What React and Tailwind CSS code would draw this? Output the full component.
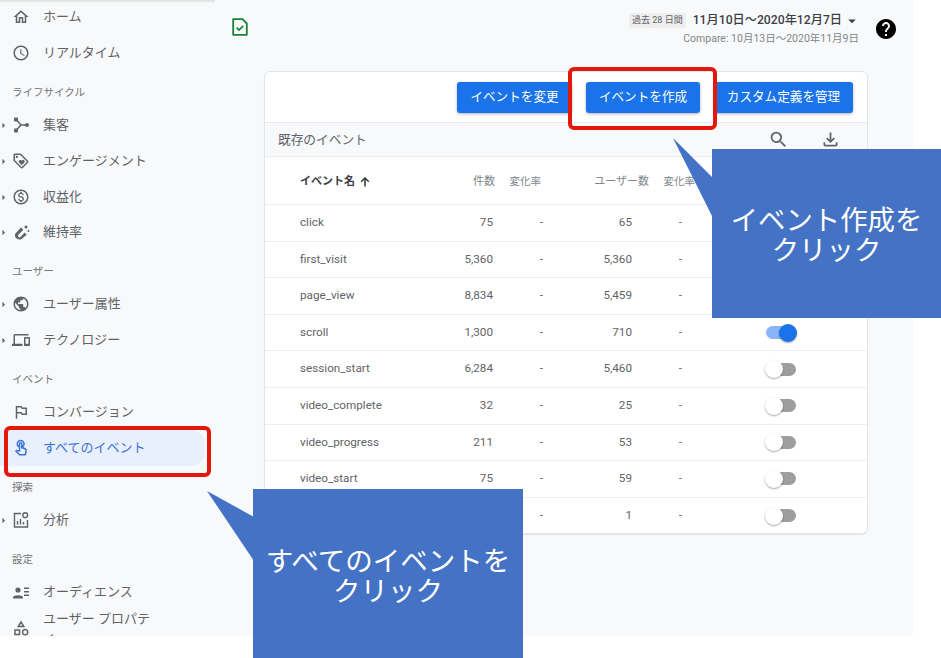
import React from "react";
import {
  MdOutlineHome, MdAccessTime, MdOutlineLoyalty, MdOutlineMonetizationOn, MdPublic,
  MdOutlineDevices, MdOutlineOutlinedFlag, MdOutlineTouchApp, MdOutlineCategory,
  MdSearch, MdOutlineFileDownload, MdHelp, MdArrowDropDown, MdArrowRight,
} from "react-icons/md";

const Acq = (p) => (
  <svg viewBox="0 0 18 18" {...p}><path d="M4 3.5 L9 9 H15 M9 9 L4 14.5" fill="none" stroke="currentColor" strokeWidth="1.5" /><rect x="2" y="1.5" width="4" height="4" rx="1" fill="currentColor" /><rect x="2" y="12.5" width="4" height="4" rx="1" fill="currentColor" /><circle cx="15" cy="9" r="2" fill="currentColor" /></svg>
);
const Magnet = (p) => (
  <svg viewBox="0 0 18 18" {...p}><path d="M3 11 L9 4.5 L11.3 6.8 L6.2 12 A1.6 1.6 0 0 0 8.6 14 L12.5 9.5 L14.7 11.7 L9.6 16 A4.6 4.6 0 0 1 3 11 Z" fill="currentColor" /><circle cx="14" cy="4" r="1.5" fill="currentColor" /><circle cx="16.5" cy="8" r="1" fill="currentColor" /></svg>
);
const Analysis = (p) => (
  <svg viewBox="0 0 18 18" {...p} fill="none" stroke="currentColor" strokeWidth="1.4"><path d="M9 2.5 H2.5 V16 H15.5 V9" /><path d="M5.5 13.5 V10 M8.5 13.5 V8 M11.5 13.5 V11" /><circle cx="13.2" cy="4.2" r="2.4" /></svg>
);
const Audience = (p) => (
  <svg viewBox="0 0 18 18" {...p} fill="currentColor"><circle cx="6" cy="7" r="2.6" /><path d="M1 14.5 C1 11.5 11 11.5 11 14.5 V15.5 H1 Z" /><path d="M12 4.5 H17 V5.9 H12 Z M12 8 H17 V9.4 H12 Z M12 11.5 H17 V12.9 H12 Z" /></svg>
);
const FileCheck = (p) => (
  <svg viewBox="0 0 16 18" {...p} fill="none"><path d="M1.2 1.2 H10.5 L14.8 5.5 V16.8 H1.2 Z" stroke="#188038" strokeWidth="1.8" strokeLinejoin="round" /><path d="M4.6 9.6 L7 12 L11.2 7.8" stroke="#188038" strokeWidth="1.7" /></svg>
);
const SortUp = (p) => (
  <svg viewBox="0 0 10 10" {...p} fill="none" stroke="currentColor" strokeWidth="1.6"><path d="M5 9.5 V1.2 M1.2 4.8 L5 1 L8.8 4.8" /></svg>
);

const Item = ({ icon: Icon, label, arrow, active }) => (
  <div className={`flex h-9 w-[205px] shrink-0 items-center rounded-r-[14px] ${active ? "bg-[#e8f0fe] text-[#3b73d1]" : "text-[#5f6368]"}`}>
    <div className="flex w-[12px] shrink-0 justify-start">
      {arrow && <MdArrowRight className="ml-[-3px] text-[13px] text-[#5f6368]" />}
    </div>
    <div className="flex w-[18px] shrink-0 items-center justify-center">
      <Icon className="h-[18px] w-[18px] shrink-0" />
    </div>
    <span className="ml-[13px] text-[13px] leading-[18px]">{label}</span>
  </div>
);

const Section = ({ label }) => (
  <div className="flex h-9 shrink-0 items-center pl-3 pt-2 text-[10.5px] text-[#70757a]">{label}</div>
);

const Toggle = ({ on }) => (
  <div className={`flex h-[13px] w-[30px] items-center rounded-full ${on ? "justify-end bg-[#8ab4f8]" : "justify-start bg-[#9e9e9e]"}`}>
    <div className={`h-[18px] w-[18px] shrink-0 rounded-full shadow-[0_1px_2px_rgba(0,0,0,0.35)] ${on ? "-mr-px bg-[#1a73e8]" : "-ml-px bg-white"}`} />
  </div>
);

const rows = [
  ["click", "75", "65", false],
  ["first_visit", "5,360", "5,360", false],
  ["page_view", "8,834", "5,459", false],
  ["scroll", "1,300", "710", true],
  ["session_start", "6,284", "5,460", false],
  ["video_complete", "32", "25", false],
  ["video_progress", "211", "53", false],
  ["video_start", "75", "59", false],
  ["view_search_results", "1", "1", false],
];

const Btn = ({ children, w }) => (
  <button className={`h-[31px] rounded-[3px] bg-[#1a73e8] text-[12.6px] text-white shadow-[0_1px_3px_rgba(60,64,67,0.4)] ${w}`}>{children}</button>
);

export default function App() {
  return (
    <div className="relative h-[658px] w-[941px] overflow-hidden bg-white font-['Roboto','Noto_Sans_CJK_JP',sans-serif]">
      <div className="flex h-[636px] w-[913px] overflow-hidden bg-[#f8f9fa]">
        {/* sidebar */}
        <aside className="-mt-px flex h-[640px] w-[232px] shrink-0 flex-col">
          <Item icon={MdOutlineHome} label="ホーム" />
          <Item icon={MdAccessTime} label="リアルタイム" />
          <Section label="ライフサイクル" />
          <Item icon={Acq} label="集客" arrow />
          <Item icon={MdOutlineLoyalty} label="エンゲージメント" arrow />
          <Item icon={MdOutlineMonetizationOn} label="収益化" arrow />
          <div className="-mt-px"><Item icon={Magnet} label="維持率" arrow /></div>
          <Section label="ユーザー" />
          <Item icon={MdPublic} label="ユーザー属性" arrow />
          <Item icon={MdOutlineDevices} label="テクノロジー" arrow />
          <Section label="イベント" />
          <Item icon={MdOutlineOutlinedFlag} label="コンバージョン" />
          <Item icon={MdOutlineTouchApp} label="すべてのイベント" active />
          <Section label="探索" />
          <Item icon={Analysis} label="分析" arrow />
          <Section label="設定" />
          <Item icon={Audience} label="オーディエンス" />
          <div className="flex h-9 shrink-0 items-start text-[#5f6368]">
            <div className="w-3 shrink-0" />
            <div className="mt-[9px] flex w-[18px] shrink-0 justify-center">
              <MdOutlineCategory className="h-[18px] w-[18px] shrink-0" />
            </div>
            <span className="ml-[13px] w-[108px] break-all text-[13px] leading-[18px]">ユーザー プロパティ</span>
          </div>
        </aside>

        {/* main */}
        <main className="flex min-w-0 flex-1 flex-col">
          <header className="flex h-[71px] shrink-0 items-start">
            <FileCheck className="mt-[18px] h-[18px] w-4 shrink-0" />
            <div className="ml-auto mt-[12px] flex flex-col items-end">
              <div className="flex h-[17px] items-center">
                <span className="rounded-[2px] bg-[#eeeeee] px-[3px] py-px text-[9px] leading-[13px] text-[#5f6368]">過去 28 日間</span>
                <span className="ml-[7px] text-[12.2px] font-medium text-[#3c4043]">11月10日～2020年12月7日</span>
                <MdArrowDropDown className="ml-[1px] h-[18px] w-[18px] text-[#3c4043]" />
              </div>
              <span className="mr-[2px] mt-[2px] text-[10.5px] leading-[15px] text-[#80868b]">Compare: 10月13日～2020年11月9日</span>
            </div>
            <MdHelp className="ml-[13px] mr-[15px] mt-[17px] h-6 w-6 shrink-0 text-black" />
          </header>

          <section className="ml-8 w-[604px] rounded-[6px] border border-[#e3e5e8] bg-white shadow-[0_1px_1px_rgba(60,64,67,0.1)]">
            <div className="flex h-[50px] items-center justify-end gap-[14px] pr-[14px]">
              <Btn w="w-[115px]">イベントを変更</Btn>
              <Btn w="w-[114px]">イベントを作成</Btn>
              <Btn w="w-[139px]">カスタム定義を管理</Btn>
            </div>
            <div className="flex h-[35px] items-center border-y border-[#e8eaed] bg-[#f8f9fa] pl-[13px] text-[12.7px] text-[#5f6368]">
              <span>既存のイベント</span>
              <MdSearch className="ml-[401px] h-[21px] w-[21px] text-[#5f6368]" />
              <MdOutlineFileDownload className="ml-[31px] h-[21px] w-[21px] text-[#5f6368]" />
            </div>
            <div className="grid h-[47px] grid-cols-[174px_56px_46px_108px_46px] items-center pt-[3px] text-[11px] text-[#80868b]">
              <div className="flex items-center pl-[35px] font-bold text-[#3c4043]">
                イベント名
                <SortUp className="ml-[5px] h-[10px] w-[10px]" />
              </div>
              <div className="text-right">件数</div>
              <div className="text-right text-[10.5px]">変化率</div>
              <div className="text-right">ユーザー数</div>
              <div className="text-right text-[10.5px]">変化率</div>
            </div>
            {rows.map(([n, c, u, on]) => (
              <div key={n} className="grid h-[36.6px] grid-cols-[174px_54px_50px_89px_50px_1fr] items-center border-t border-[#eceef0] text-[11.7px] text-[#5f6368]">
                <div className="pl-[35px]">{n}</div>
                <div className="text-right">{c}</div>
                <div className="text-right">-</div>
                <div className="text-right">{u}</div>
                <div className="text-right">-</div>
                <div className="pl-[84px]"><Toggle on={on} /></div>
              </div>
            ))}
          </section>
        </main>
      </div>

      {/* annotations */}
      <div className="pointer-events-none absolute left-0 top-0 h-[3px] w-[215px] bg-gradient-to-b from-[#dcdcdc] to-transparent" />
      <div className="absolute left-[4px] top-[426px] h-[51px] w-[207px] rounded-[6px] border-4 border-[#e2180b]" />
      <div className="absolute left-[568px] top-[67px] h-[63px] w-[149px] rounded-[6px] border-4 border-[#e2180b]" />

      <svg className="absolute left-0 top-0 h-[658px] w-[941px]" viewBox="0 0 941 658">
        <polygon points="207,491 254,517 254,561" fill="#4472c4" />
        <polygon points="673,138 713,178 713,218" fill="#4472c4" />
      </svg>

      <div className="absolute left-[712px] top-[149px] flex h-[169px] w-[229px] flex-col items-center justify-center bg-[#4472c4] pt-[4px] text-[27.4px] leading-[30px] text-white">
        <span>イベント作成を</span>
        <span>クリック</span>
      </div>
      <div className="absolute left-[253px] top-[489px] flex h-[169px] w-[270px] flex-col items-center bg-[#4472c4] pt-[58px] text-[27.5px] leading-[30px] text-white">
        <span>すべてのイベントを</span>
        <span>クリック</span>
      </div>
    </div>
  );
}
